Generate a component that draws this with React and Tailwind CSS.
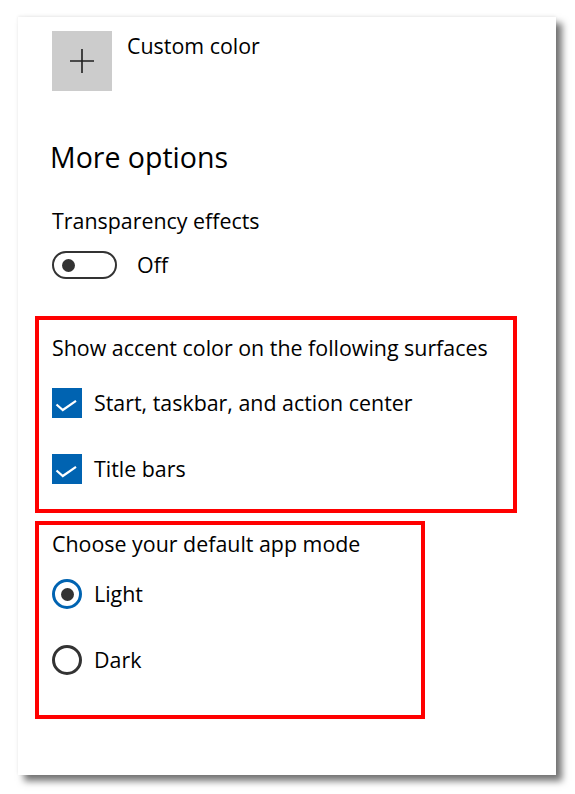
import React from 'react'

function Checkbox() {
  return (
    <div className="w-[30px] h-[30px] bg-[#0063b1] flex items-center justify-center shrink-0">
      <svg width="30" height="30" viewBox="0 0 30 30">
        <path d="M4.5 16.5 L10.8 22 L24 12.8" fill="none" stroke="#fff" strokeWidth="2.2" />
      </svg>
    </div>
  )
}

function Radio({ checked }) {
  return (
    <div
      className={`w-[30px] h-[30px] rounded-full border-[3px] flex items-center justify-center shrink-0 ${
        checked ? 'border-[#0063b1]' : 'border-[#333333]'
      }`}
    >
      {checked && <div className="w-[13px] h-[13px] rounded-full bg-[#333333]" />}
    </div>
  )
}

export default function App() {
  return (
    <div className="min-h-[794px] bg-white pt-[17px] pl-[18px] font-['Segoe_UI','Open_Sans',sans-serif] text-black">
      <div className="w-[538px] h-[758px] bg-white shadow-[0_-1px_3px_rgba(0,0,0,0.08),6px_6px_7px_rgba(0,0,0,0.55)] pt-[14px] pl-[17px]">
        <div className="pl-[17px]">
          <div className="flex items-start">
            <div className="w-[60px] h-[60px] bg-[#cccccc] flex items-center justify-center">
              <svg width="26" height="26" viewBox="0 0 26 26">
                <path d="M1 13 H25 M13 1 V25" stroke="#1f1f1f" strokeWidth="1.6" />
              </svg>
            </div>
            <span className="ml-[15px] mt-[1px] text-[21.4px] leading-[28px]">Custom color</span>
          </div>

          <h2 className="mt-[48px] -ml-[2px] text-[28.5px] leading-[36px] font-normal">More options</h2>

          <div className="mt-[32px] text-[21.4px] leading-[28px]">Transparency effects</div>

          <div className="mt-[16px] flex items-center">
            <div className="w-[65px] h-[28px] rounded-full border-[2.5px] border-[#333333] flex items-center pl-[8px]">
              <div className="w-[13px] h-[13px] rounded-full bg-[#333333]" />
            </div>
            <span className="ml-[20px] text-[21.4px] leading-[28px]">Off</span>
          </div>
        </div>

        <div className="mt-[37px] w-[482px] h-[197px] border-4 border-[#ff0000] pl-[13px] pt-[14px]">
          <div className="text-[21.4px] leading-[28px]">Show accent color on the following surfaces</div>
          <div className="mt-[26px] flex items-center gap-[12px]">
            <Checkbox />
            <span className="text-[21.4px] leading-[28px]">Start, taskbar, and action center</span>
          </div>
          <div className="mt-[36px] flex items-center gap-[12px]">
            <Checkbox />
            <span className="text-[21.4px] leading-[28px]">Title bars</span>
          </div>
        </div>

        <div className="mt-[8px] w-[390px] h-[198px] border-4 border-[#ff0000] pl-[13px] pt-[5px]">
          <div className="text-[21.4px] leading-[28px]">Choose your default app mode</div>
          <div className="mt-[21px] flex items-center gap-[12px]">
            <Radio checked />
            <span className="text-[21.4px] leading-[28px]">Light</span>
          </div>
          <div className="mt-[36px] flex items-center gap-[12px]">
            <Radio />
            <span className="text-[21.4px] leading-[28px]">Dark</span>
          </div>
        </div>
      </div>
    </div>
  )
}
